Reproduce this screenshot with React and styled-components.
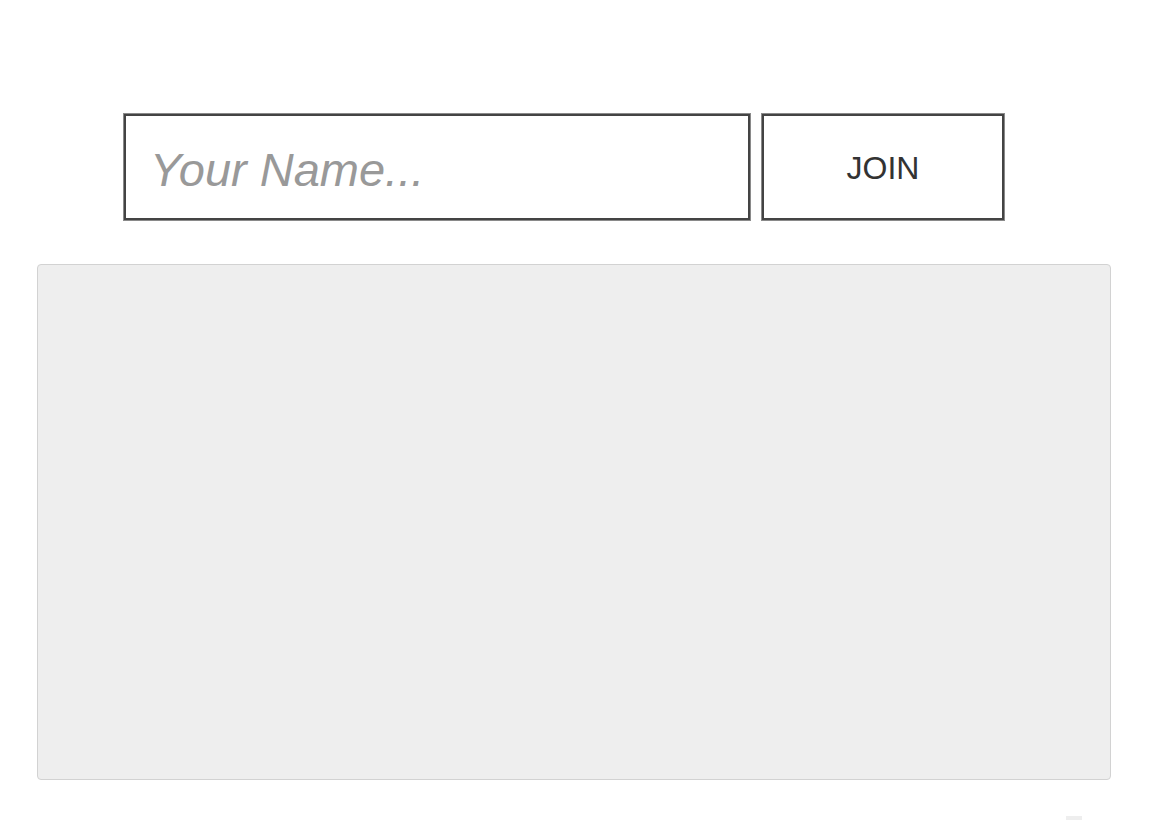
import React from "react";
import styled, { createGlobalStyle } from "styled-components";

const Global = createGlobalStyle`
  html, body { margin: 0; padding: 0; background: #fff; }
  body { font-family: "Liberation Sans", Arial, sans-serif; }
  * { box-sizing: border-box; }
`;

const Page = styled.div`
  width: 1176px;
  height: 820px;
  overflow: hidden;
  display: flex;
  flex-direction: column;
  align-items: flex-start;
`;

const JoinForm = styled.form`
  display: flex;
  gap: 12px;
  margin: 114px 0 0 124px;
  flex-shrink: 0;
`;

const NameInput = styled.input`
  width: 626px;
  height: 106px;
  border: 2px solid #444;
  box-shadow: 0 0 0 1px #8a8a8a;
  margin: 0;
  padding: 4px 0 0 24px;
  font-family: "Liberation Sans", Arial, sans-serif;
  font-size: 47px;
  color: #333;
  background: #fff;
  outline: none;
  border-radius: 0;
  &::placeholder {
    color: #999;
    font-style: italic;
  }
`;

const JoinButton = styled.button`
  width: 242px;
  height: 106px;
  margin: 0;
  border: 2px solid #444;
  box-shadow: 0 0 0 1px #8a8a8a;
  background: #fff;
  font-family: "Liberation Sans", Arial, sans-serif;
  font-size: 32px;
  color: #333;
  text-transform: uppercase;
  cursor: pointer;
  padding: 2px 0 0;
  border-radius: 0;
`;

const Board = styled.div`
  margin: 44px 0 0 37px;
  width: 1074px;
  height: 516px;
  flex-shrink: 0;
  background: #eee;
  border: 1px solid #d2d2d2;
  border-radius: 4px;
`;

const Stub = styled.div`
  margin: 36px 0 0 1066px;
  width: 16px;
  height: 10px;
  background: #eee;
  flex-shrink: 0;
`;

export default function App() {
  return (
    <>
      <Global />
      <Page>
        <JoinForm onSubmit={(e) => e.preventDefault()}>
          <NameInput placeholder="Your Name..." />
          <JoinButton type="submit">Join</JoinButton>
        </JoinForm>
        <Board />
        <Stub />
      </Page>
    </>
  );
}
